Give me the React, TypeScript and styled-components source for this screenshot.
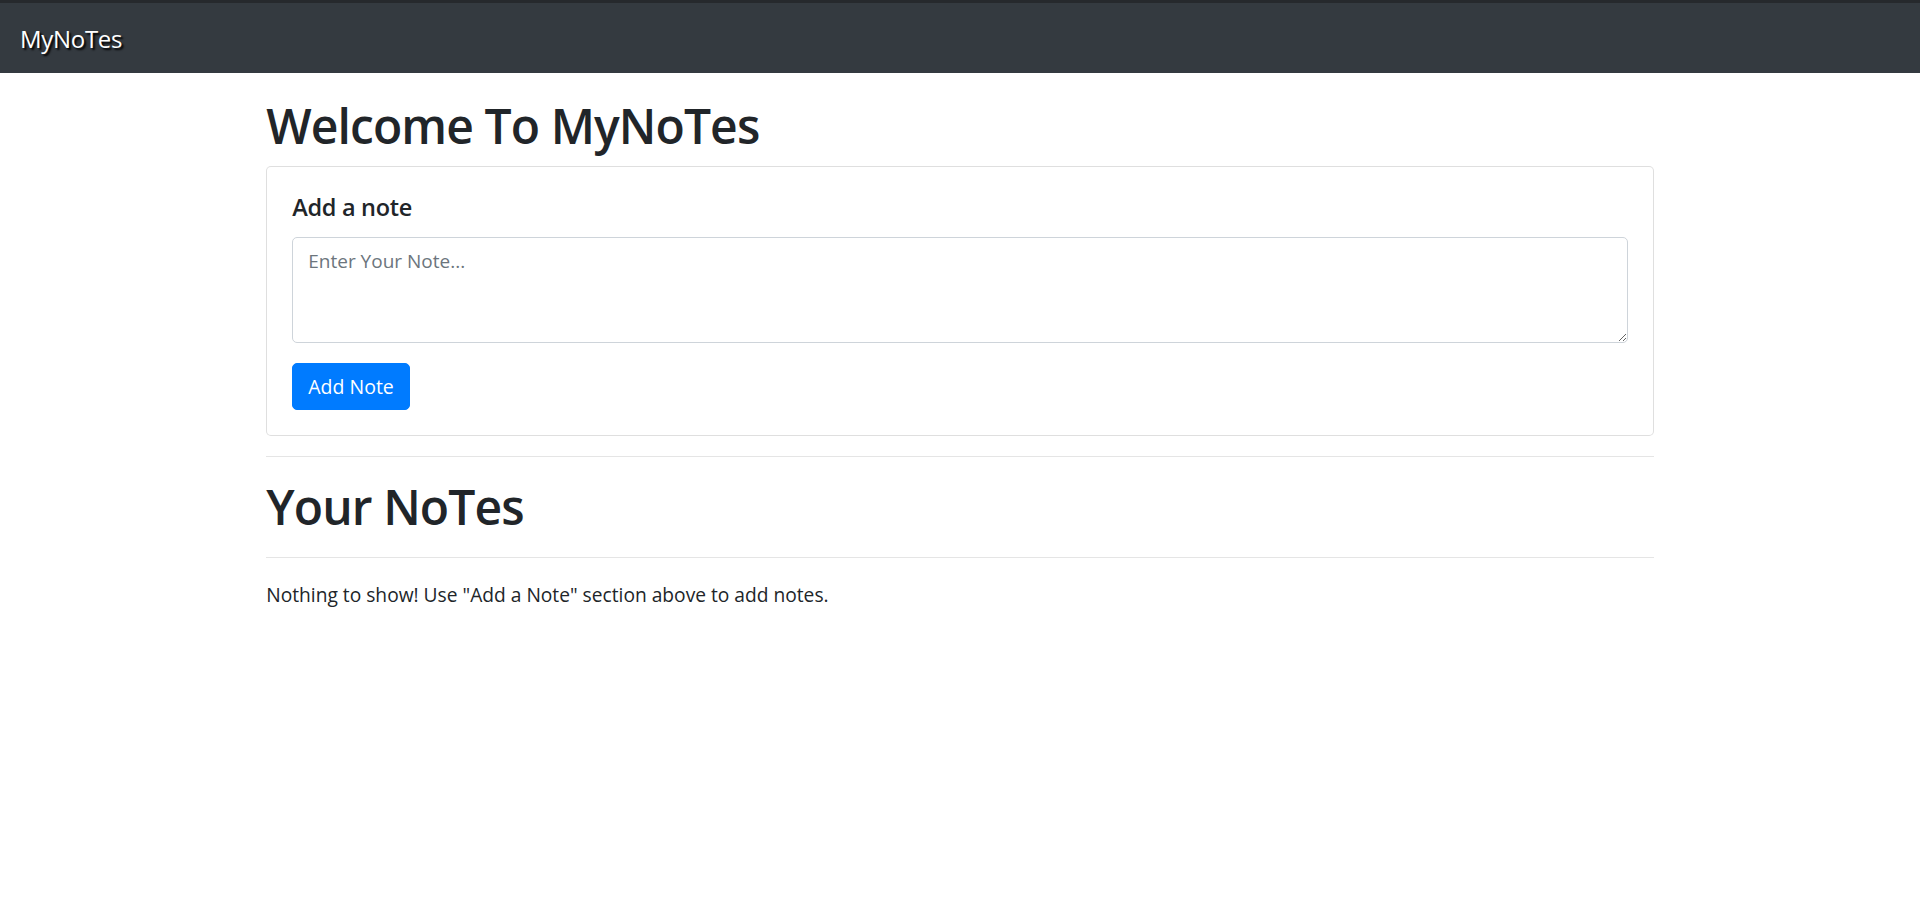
import * as React from 'react';
import styled, { createGlobalStyle } from 'styled-components';

const colors = {
  text: '#212529',
  dark: '#343a40',
  primary: '#007bff',
  muted: '#6c757d',
};

export default function App() {
  return (
    <>
      <GlobalStyle />
      <Navbar>
        <Brand href="#">MyNoTes</Brand>
      </Navbar>

      <Container>
        <Heading>Welcome To MyNoTes</Heading>

        <Card>
          <CardBody>
            <CardTitle>Add a note</CardTitle>
            <FormGroup>
              <NoteInput rows={3} placeholder="Enter Your Note..." />
            </FormGroup>
            <PrimaryButton type="button">Add Note</PrimaryButton>
          </CardBody>
        </Card>

        <Divider />
        <Heading>Your NoTes</Heading>
        <Divider />

        <EmptyText>
          Nothing to show! Use "Add a Note" section above to add notes.
        </EmptyText>
      </Container>
    </>
  );
}

const GlobalStyle = createGlobalStyle`
  * {
    box-sizing: border-box;
  }

  body {
    margin: 0;
    background: #fff;
    color: ${colors.text};
    font-family: 'Open Sans', 'Noto Sans', sans-serif;
    font-size: 20px;
    line-height: 1.5;
  }
`;

const Navbar = styled.nav`
  display: flex;
  align-items: center;
  height: 73px;
  padding: 10px 20px;
  background-color: ${colors.dark};
  border-top: 3px solid #26292d;
`;

const Brand = styled.a`
  font-size: 24px;
  line-height: 37px;
  color: #fff;
  text-decoration: none;
  text-shadow: 2px 2px 2px #000;
  letter-spacing: -0.3px;
`;

const Container = styled.main`
  width: 1425px;
  margin: 23px auto 0;
  padding: 0 18.75px;
`;

const Heading = styled.h1`
  margin: 0 0 10px;
  font-size: 48px;
  font-weight: 600;
  line-height: 60px;
  letter-spacing: -0.9px;
  color: ${colors.text};
`;

const Card = styled.section`
  border: 1px solid rgba(0, 0, 0, 0.125);
  border-radius: 5px;
  background: #fff;
`;

const CardBody = styled.div`
  padding: 25px;
`;

const CardTitle = styled.h5`
  margin: 0 0 15px;
  font-size: 23.5px;
  font-weight: 600;
  line-height: 30px;
  letter-spacing: -0.3px;
`;

const FormGroup = styled.div`
  margin-bottom: 20px;
`;

const NoteInput = styled.textarea`
  display: block;
  width: 100%;
  height: 106px;
  padding: 7.5px 15px;
  font-family: inherit;
  font-size: 19px;
  line-height: 30px;
  color: #495057;
  border: 1px solid #ced4da;
  border-radius: 5px;
  outline: none;

  &::placeholder {
    color: ${colors.muted};
  }
`;

const PrimaryButton = styled.button`
  height: 47px;
  padding: 7.5px 15px;
  font-family: inherit;
  font-size: 19.5px;
  line-height: 30px;
  color: #fff;
  background-color: ${colors.primary};
  border: 1px solid ${colors.primary};
  border-radius: 5px;
  cursor: pointer;
`;

const Divider = styled.hr`
  margin: 20px 0;
  border: 0;
  border-top: 1px solid rgba(0, 0, 0, 0.1);
`;

const EmptyText = styled.p`
  margin: 22px 0 0;
  font-size: 19.2px;
  line-height: 30px;
`;
